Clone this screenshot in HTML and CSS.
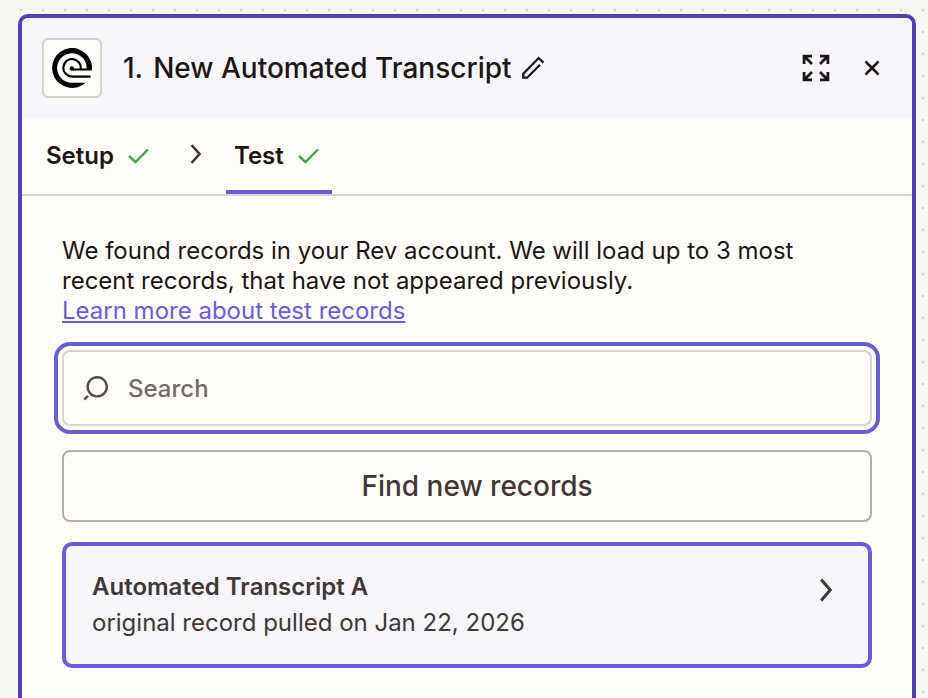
FILE: index.html
```html
<!DOCTYPE html>
<html lang="en">
<head>
  <meta charset="UTF-8" />
  <meta name="viewport" content="width=device-width, initial-scale=1.0" />
  <title>New Automated Transcript</title>
  <link rel="stylesheet" href="styles.css">
</head>
<body>

  <main class="panel">
    <header class="panel-header">
      <div class="app-logo">
        <svg width="40" height="40" viewBox="0 0 40 40" fill="none" stroke="#000">
          <path d="M39.9 22.6A20 20 0 1 0 33.6 34.7H22A14.8 14.8 0 1 1 34.7 20.4H20V22.6Z" fill="#000" stroke="none" />
          <path d="M28.8 21A8.8 8.8 0 1 0 20 28.6H38.6" stroke-width="2.2" />
          <circle cx="19.8" cy="20.4" r="2.2" fill="#000" stroke="none" />
        </svg>
      </div>
      <h1 class="title"><span class="step">1.</span>New Automated Transcript</h1>
      <svg class="edit" width="24" height="24" viewBox="0 0 24 24" fill="none" stroke="#201515" stroke-width="2.3">
        <path d="M18 8.7L5.2 21.7H1.3V17.6L16.7 2L21.4 6.6" />
      </svg>
      <button class="icon-btn expand" aria-label="Expand">
        <svg width="28" height="28" viewBox="0 0 28 28" fill="none" stroke="#201515" stroke-width="2.8">
          <path d="M10 2.1H2.1V10M2.1 2.1L10 10" />
          <path d="M18 2.1H25.9V10M25.9 2.1L18 10" />
          <path d="M10 25.9H2.1V18M2.1 25.9L10 18" />
          <path d="M18 25.9H25.9V18M25.9 25.9L18 18" />
        </svg>
      </button>
      <button class="icon-btn close" aria-label="Close">
        <svg width="16" height="16" viewBox="0 0 16 16" fill="none" stroke="#201515" stroke-width="2.6">
          <path d="M1.5 1.5L14.5 14.5M14.5 1.5L1.5 14.5" />
        </svg>
      </button>
    </header>

    <nav class="tabs">
      <div class="tab">
        Setup
        <svg class="check" width="22" height="16" viewBox="0 0 22 16"><path d="M1 8L7.5 14L20 1.5" /></svg>
      </div>
      <svg class="tab-arrow" width="12" height="20" viewBox="0 0 12 20"><path d="M1.5 1L9.5 10L1.5 19" /></svg>
      <div class="tab active">
        Test
        <svg class="check" width="22" height="16" viewBox="0 0 22 16"><path d="M1 8L7.5 14L20 1.5" /></svg>
      </div>
    </nav>

    <section class="content">
      <p class="intro">
        We found records in your Rev account. We will load up to 3 most<br>
        recent records, that have not appeared previously.<br>
        <a href="#" class="link">Learn more about test records</a>
      </p>

      <label class="search">
        <svg width="26" height="26" viewBox="0 0 26 26" fill="none" stroke="#574e4c" stroke-width="2.4">
          <circle cx="15.2" cy="11.8" r="9.6" />
          <path d="M6 20.8L2.2 24.6" />
        </svg>
        <input type="text" placeholder="Search">
      </label>

      <button class="find-btn">Find new records</button>

      <div class="record">
        <div>
          <div class="record-name">Automated Transcript A</div>
          <div class="record-info">original record pulled on Jan 22, 2026</div>
        </div>
        <svg class="record-arrow" width="14" height="24" viewBox="0 0 14 24"><path d="M1.2 1.5L10.2 12L1.2 22.5" /></svg>
      </div>
    </section>
  </main>

</body>
</html>
```
FILE: styles.css
```css
* {
  margin: 0;
  padding: 0;
  box-sizing: border-box;
}

body {
  height: 100vh;
  overflow: hidden;
  padding: 14px 12px 0 18px;
  font-family: Inter, "Liberation Sans", sans-serif;
  color: #201515;
  background-color: #f8f7f3;
  /* dotted canvas */
  background-image: radial-gradient(circle, #d6d3ce 1px, transparent 1.7px);
  background-size: 22px 22px;
  background-position: 10px -1px;
}

.panel {
  height: 684px;
  border: 4px solid #503ebd;
  border-bottom: none;
  border-radius: 10px 10px 0 0;
  background-color: #fffdf9;
  overflow: hidden;
}

.panel-header {
  display: flex;
  align-items: center;
  height: 100px;
  padding: 0 32px 0 20px;
  background-color: #f7f6fd;
}

.app-logo {
  display: flex;
  align-items: center;
  justify-content: center;
  width: 60px;
  height: 60px;
  border: 2px solid #d7d3c9;
  border-radius: 6px;
  background-color: #fffdf9;
}

.title {
  margin-left: 21px;
  font-size: 28px;
  font-weight: 500;
  white-space: nowrap;
}

.step {
  margin-right: 10px;
}

.edit {
  margin-left: 10px;
}

.icon-btn {
  display: flex;
  border: none;
  background: none;
}

.expand {
  margin-left: auto;
}

.close {
  margin-left: 34px;
}

.tabs {
  display: flex;
  height: 78px;
  padding-left: 16px;
  border-bottom: 2px solid #d7d3cf;
}

.tab {
  display: flex;
  align-items: center;
  height: 76px;
  padding: 0 12px 0 8px;
  border-top: 2px solid transparent;
  border-bottom: 4px solid transparent;
  font-size: 24px;
  font-weight: 600;
}

.tab.active {
  border-bottom-color: #695be0;
}

.check {
  margin: 1px 0 0 14px;
  fill: none;
  stroke: #4aa24d;
  stroke-width: 2.4;
}

.tab-arrow {
  margin: 26px 24px 0 28px;
  fill: none;
  stroke: #413735;
  stroke-width: 2.6;
}

.content {
  display: flex;
  flex-direction: column;
  padding: 40px 40px 0;
}

.intro {
  font-size: 24px;
  line-height: 30px;
  white-space: nowrap;
}

.link {
  color: #695be0;
  text-decoration-thickness: 2px;
  text-underline-offset: 2px;
}

.search {
  display: flex;
  align-items: center;
  gap: 20px;
  height: 76px;
  margin-top: 24px;
  padding-left: 18px;
  border: 2px solid #d7d3c9;
  border-radius: 8px;
  outline: 4px solid #695be0;
  outline-offset: 4px;
}

.search input {
  flex: 1;
  border: none;
  outline: none;
  background: none;
  font: 500 24px Inter, "Liberation Sans", sans-serif;
}

.search input::placeholder {
  color: #746a68;
}

.find-btn {
  height: 72px;
  margin-top: 24px;
  padding-left: 20px;
  border: 2px solid #b3b0aa;
  border-radius: 8px;
  background: none;
  color: #413735;
  font: 500 28px Inter, "Liberation Sans", sans-serif;
}

.record {
  display: flex;
  justify-content: space-between;
  height: 126px;
  margin-top: 20px;
  padding: 23px 34px 0 26px;
  border: 4px solid #695be0;
  border-radius: 10px;
  background-color: #f7f6fd;
  color: #413735;
  font-size: 24px;
  line-height: 36px;
}

.record-name {
  font-weight: 600;
}

.record-arrow {
  margin-top: 9px;
  fill: none;
  stroke: #413735;
  stroke-width: 3;
}
```
